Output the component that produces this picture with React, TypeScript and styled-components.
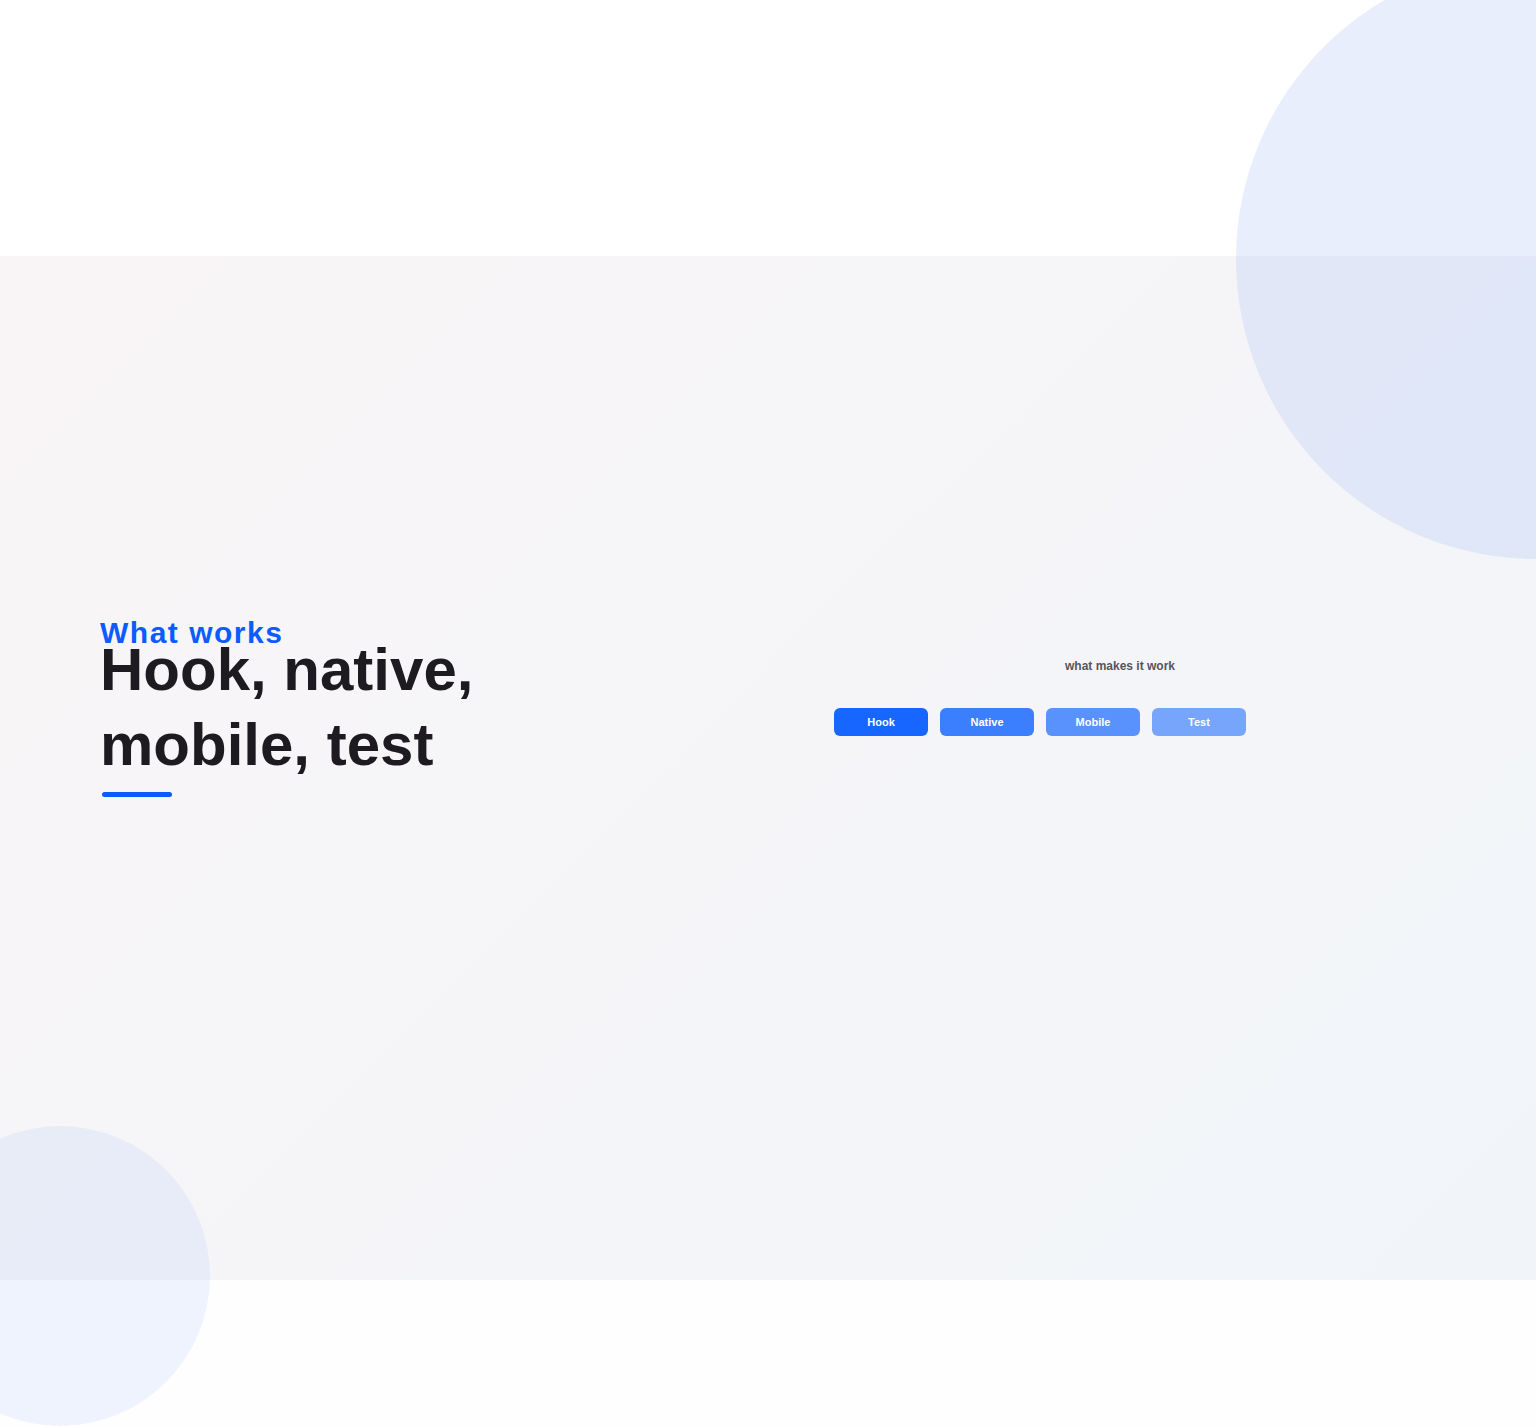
import React from "react";
import styled, { createGlobalStyle } from "styled-components";

const GlobalStyle = createGlobalStyle`
  html, body {
    margin: 0;
    padding: 0;
    background: #ffffff;
  }
  body {
    font-family: "Liberation Sans", Arial, Helvetica, sans-serif;
    -webkit-font-smoothing: antialiased;
  }
  * { box-sizing: border-box; }
`;

const Page = styled.div`
  position: relative;
  width: 100%;
  min-height: 1426px;
  overflow: hidden;
  background: #ffffff;
`;

const TopSpace = styled.div`
  height: 256px;
`;

const Section = styled.section`
  height: 1024px;
  display: grid;
  grid-template-columns: 668px 1fr;
  align-items: start;
  padding: 362px 64px 0 100px;
  background: linear-gradient(135deg, #f9f5f6 0%, #f5f5f8 50%, #f1f5f9 100%);
`;

const BottomSpace = styled.div`
  height: 146px;
  background: #fefefe;
`;

const Blob = styled.div<{ $size: number; $tint: string }>`
  position: absolute;
  width: ${(p) => p.$size}px;
  height: ${(p) => p.$size}px;
  border-radius: 50%;
  background: ${(p) => p.$tint};
  pointer-events: none;
`;

const TopBlob = styled(Blob)`
  top: -41px;
  right: -300px;
`;

const BottomBlob = styled(Blob)`
  top: 1126px;
  left: -90px;
`;

const Intro = styled.div`
  display: flex;
  flex-direction: column;
  align-items: flex-start;
`;

const Eyebrow = styled.span`
  font-size: 30px;
  line-height: 30px;
  font-weight: 700;
  letter-spacing: 1.5px;
  color: #0a5cff;
`;

const Title = styled.h2`
  margin: -16px 0 0;
  font-size: 60px;
  line-height: 75px;
  font-weight: 700;
  letter-spacing: 0;
  color: #1d1b1f;
`;

const Rule = styled.div`
  width: 70px;
  height: 5px;
  margin: 10px 0 0 2px;
  border-radius: 3px;
  background: #0a5cff;
`;

const Features = styled.div`
  margin-top: 40px;
  display: flex;
  flex-direction: column;
  align-items: center;
`;

const Caption = styled.p`
  margin: 0;
  font-size: 12px;
  line-height: 16px;
  font-weight: 700;
  color: #555558;
`;

const Chips = styled.div`
  align-self: flex-start;
  margin: 34px 0 0 66px;
  display: flex;
  gap: 12px;
`;

const Chip = styled.button<{ $fade: number }>`
  width: 94px;
  height: 28px;
  padding: 0;
  border: none;
  border-radius: 6px;
  background: rgba(23, 102, 255, ${(p) => p.$fade});
  color: #ffffff;
  font-family: inherit;
  font-size: 11px;
  font-weight: 700;
  cursor: pointer;
`;

const chips = [
  { label: "Hook", fade: 1 },
  { label: "Native", fade: 0.84 },
  { label: "Mobile", fade: 0.7 },
  { label: "Test", fade: 0.56 },
];

export default function App() {
  return (
    <>
      <GlobalStyle />
      <Page>
        <TopSpace />
        <Section>
          <Intro>
            <Eyebrow>What works</Eyebrow>
            <Title>
              Hook, native,
              <br />
              mobile, test
            </Title>
            <Rule />
          </Intro>
          <Features>
            <Caption>what makes it work</Caption>
            <Chips>
              {chips.map((c) => (
                <Chip key={c.label} $fade={c.fade}>
                  {c.label}
                </Chip>
              ))}
            </Chips>
          </Features>
        </Section>
        <BottomSpace />
        <TopBlob $size={600} $tint="rgba(180, 200, 245, 0.3)" />
        <BottomBlob $size={300} $tint="rgba(180, 206, 252, 0.22)" />
      </Page>
    </>
  );
}
